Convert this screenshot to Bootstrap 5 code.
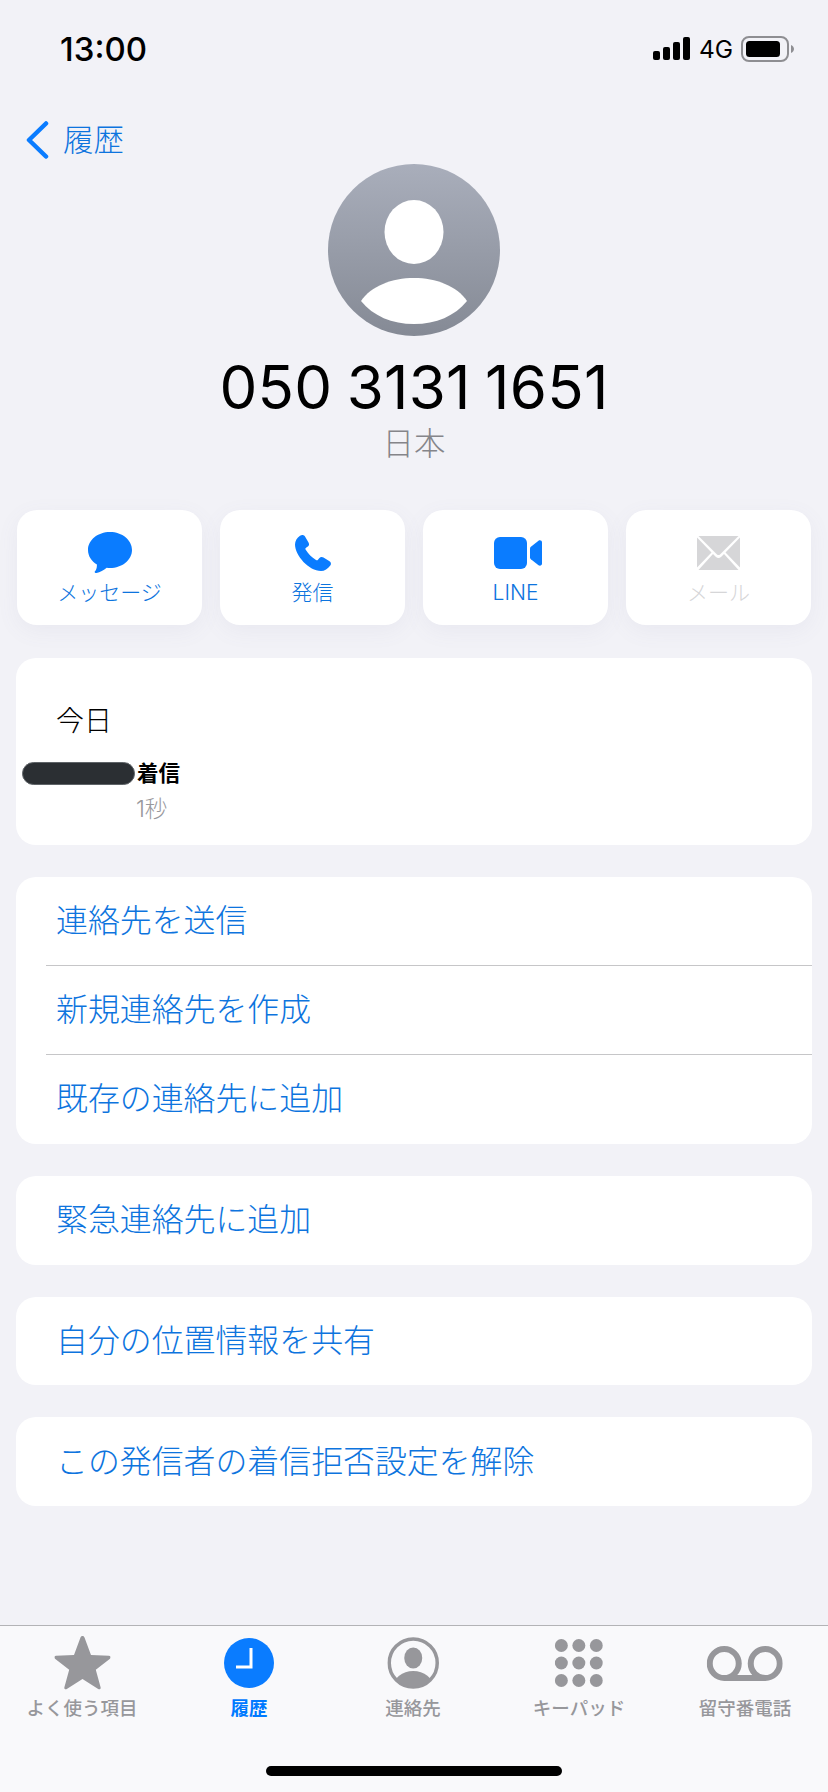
<!DOCTYPE html>
<html lang="ja">
<head>
<meta charset="utf-8">
<title>履歴</title>
<link href="https://cdn.jsdelivr.net/npm/bootstrap@5.3.0/dist/css/bootstrap.min.css" rel="stylesheet">
<style>
:root{--ios-blue:#007aff;--ios-text-blue:#0d74de;}
html,body{height:100%;}
body{width:828px;height:1792px;overflow:hidden;background:#f2f2f7;color:#000;font-family:Inter,"Noto Sans CJK JP",sans-serif;}
.screen{height:1792px;}
.status-line{height:98px;padding:0 33px 0 60px;}
.clock-text{font-size:33px;font-weight:500;letter-spacing:0;line-height:1;}
.net-text{font-size:24.5px;line-height:1;margin:0 8px 0 9px;}
.back-line{height:48px;margin-top:18px;padding-left:25px;color:var(--ios-text-blue);font-size:30.5px;line-height:1;font-weight:300;}
.back-line svg{margin-right:14px;}
.avatar-wrap{height:172px;}
.avatar-svg{display:block;}
.phone-title{font-size:60px;line-height:70px;margin:16px 0 0;font-weight:400;letter-spacing:.3px;word-spacing:-3px;}
.country-text{font-size:31.5px;line-height:42px;color:#85858a;font-weight:300;margin-top:1px;}
.action-row{margin:45px 17px 0;gap:18px;}
.action-tile{flex:1 1 0;height:115px;border:0;border-radius:20px;background:#fff;box-shadow:0 6px 22px rgba(120,120,150,.07);color:var(--ios-text-blue);font-size:21px;line-height:24px;font-weight:300;padding-top:22px;}
.action-tile.is-off{color:#d6d6d8;}
.icon-box{height:41px;margin-bottom:8px;}
.nudge-right{margin-left:4px;}
.sheet{margin:0 16px;border:0;border-radius:20px;background:#fff;overflow:hidden;}
.log-sheet{margin-top:33px;height:187px;position:relative;}
.today-text{font-size:28px;line-height:36px;padding:45px 0 0 40px;font-weight:300;}
.log-row{margin-top:22px;padding-left:6px;}
.blot{width:113px;height:23px;background:#2b2f33;border-radius:12px;border:1px solid #5f6468;flex:none;}
.log-kind{font-size:21.5px;line-height:24px;font-weight:700;margin-left:2px;}
.log-dur{font-size:22.5px;line-height:24px;color:#98989c;font-weight:300;padding-left:120px;margin-top:12px;}
.list-sheet{margin-top:32px;}
.list-sheet .list-group-item{border:0;background:transparent;height:88.9px;padding:0 0 0 40px;display:flex;align-items:center;font-size:31.9px;line-height:1;color:var(--ios-text-blue);font-weight:300;position:relative;}
.list-sheet .list-group-item + .list-group-item{box-shadow:none;}
.list-sheet .list-group-item + .list-group-item::before{content:"";position:absolute;left:30px;right:0;top:-1px;height:1px;background:#c6c6c8;}
.tab-bar{margin-top:auto;height:167px;border-top:1px solid #b3b3b6;background:#f9f9fb;position:relative;}
.tab-item{position:absolute;top:9px;text-align:center;color:#97979b;font-size:18.5px;line-height:24px;font-weight:500;transform:translateX(-50%);white-space:nowrap;}
.tab-item.is-on{color:var(--ios-blue);font-weight:700;}
.tab-glyph{height:56px;margin-bottom:5px;display:flex;justify-content:center;align-items:center;}
.tape-icon{margin-top:2px;}
.home-bar{position:absolute;left:266px;bottom:16px;width:296px;height:10px;border-radius:5px;background:#000;}
</style>
</head>
<body>
<div class="screen d-flex flex-column">
  <div class="status-line d-flex align-items-center justify-content-between">
    <span class="clock-text">13:00</span>
    <span class="d-flex align-items-center">
      <svg width="37" height="24" viewBox="0 0 37 24"><g fill="#000"><rect x="0" y="14" width="7" height="9" rx="2"/><rect x="10" y="10" width="7" height="13" rx="2"/><rect x="20" y="5" width="7" height="18" rx="2"/><rect x="30" y="0" width="7" height="23" rx="2"/></g></svg>
      <span class="net-text">4G</span>
      <svg width="54" height="26" viewBox="0 0 54 26"><rect x="1" y="1" width="46" height="24" rx="7" fill="none" stroke="#8e8e92" stroke-width="2"/><rect x="5" y="5" width="34" height="16" rx="3.500" fill="#000"/><path d="M50 9c2 1 3 2.500 3 4s-1 3-3 4z" fill="#8e8e92"/></svg>
    </span>
  </div>

  <div class="back-line d-flex align-items-center">
    <svg width="24" height="38" viewBox="0 0 24 38"><path d="M21 2.500 4 19l17 16.500" fill="none" stroke="#0a7cff" stroke-width="4.500" stroke-linecap="round" stroke-linejoin="round"/></svg>
    <span>履歴</span>
  </div>

  <div class="avatar-wrap d-flex justify-content-center">
    <svg class="avatar-svg" width="172" height="172" viewBox="0 0 172 172">
      <defs><linearGradient id="avg" x1="0" y1="0" x2="0" y2="1"><stop offset="0" stop-color="#a9aebb"/><stop offset="1" stop-color="#858a95"/></linearGradient></defs>
      <circle cx="86" cy="86" r="86" fill="url(#avg)"/>
      <ellipse cx="86" cy="68" rx="29.500" ry="32" fill="#fff"/>
      <path d="M33 137c10-15 31-23 53-23s43 8 53 23c-12 15-31 23-53 23s-41-8-53-23z" fill="#fff"/>
    </svg>
  </div>

  <h1 class="phone-title text-center">050 3131 1651</h1>
  <div class="country-text text-center">日本</div>

  <div class="action-row d-flex">
    <div class="action-tile card text-center">
      <div class="icon-box d-flex justify-content-center align-items-center">
        <svg width="44" height="41" viewBox="0 0 44 41"><path d="M22 0c12.200 0 22 8 22 18s-9.800 18-22 18c-1.100 0-2.200-.1-3.300-.2C15.800 38.500 12 40.300 8.500 41c-1.500.2-2.300-.8-1.500-1.700 1.300-1.500 2-3.800 1.900-6.700C3.500 29.300 0 24 0 18 0 8 9.800 0 22 0z" fill="#0a7cff"/></svg>
      </div>
      メッセージ
    </div>
    <div class="action-tile card text-center">
      <div class="icon-box d-flex justify-content-center align-items-center">
        <svg width="36" height="36" viewBox="0 0 36 36"><path d="M5 .8C7-.5 9 0 10 1.500l3.500 6c1 1.800.5 3.300-1 4.300l-1.500 1c-.7.500-.8 1.200-.3 2 2.800 4.500 5.800 7.500 10.300 10.200.8.500 1.500.4 2-.3l1.200-1.400c1.100-1.300 2.800-1.600 4.300-.7l6 3.700c1.500.9 1.900 2.700.8 4.100C32.800 33.800 29.500 36 26 36 14 36 0 20.500 0 9.500 0 6 2 2.800 5 .8z" fill="#0a7cff"/></svg>
      </div>
      発信
    </div>
    <div class="action-tile card text-center">
      <div class="icon-box d-flex justify-content-center align-items-center">
        <svg class="nudge-right" width="48" height="32" viewBox="0 0 48 32"><rect x="0" y="0" width="33" height="32" rx="6" fill="#0a7cff"/><path d="M36 11.500c0-.8.300-1.300.9-1.800l7.600-5.900c1.500-1 3.500-.2 3.500 1.700v21c0 1.900-2 2.700-3.500 1.700l-7.600-5.900c-.6-.5-.9-1-.9-1.800z" fill="#0a7cff"/></svg>
      </div>
      LINE
    </div>
    <div class="action-tile card text-center is-off">
      <div class="icon-box d-flex justify-content-center align-items-center">
        <svg width="43" height="34" viewBox="0 0 43 34"><g fill="#d6d6d8"><path d="M1.500 0h40L23 18.500c-.9.800-2.100.8-3 0z"/><path d="M0 1.500V31.500L14.500 16.500zM43 1.500V31.500L28.500 16.500z"/><path d="M1.500 34 16 18l3 3c1.500 1.300 3.500 1.300 5 0l3-3 14.500 16z"/></g></svg>
      </div>
      メール
    </div>
  </div>

  <div class="sheet card log-sheet">
    <div class="today-text">今日</div>
    <div class="log-row d-flex align-items-center">
      <span class="blot"></span>
      <span class="log-kind">着信</span>
    </div>
    <div class="log-dur">1秒</div>
  </div>

  <div class="sheet list-sheet">
    <div class="list-group list-group-flush">
      <div class="list-group-item">連絡先を送信</div>
      <div class="list-group-item">新規連絡先を作成</div>
      <div class="list-group-item">既存の連絡先に追加</div>
    </div>
  </div>
  <div class="sheet list-sheet"><div class="list-group list-group-flush"><div class="list-group-item">緊急連絡先に追加</div></div></div>
  <div class="sheet list-sheet"><div class="list-group list-group-flush"><div class="list-group-item">自分の位置情報を共有</div></div></div>
  <div class="sheet list-sheet"><div class="list-group list-group-flush"><div class="list-group-item">この発信者の着信拒否設定を解除</div></div></div>

  <div class="tab-bar">
    <div class="tab-item" style="left:82px">
      <div class="tab-glyph"><svg width="56" height="54" viewBox="0 0 56 54"><path d="M28 0c1 0 1.700.6 2.200 2l6.300 17 18 .8c1.800.1 2.400 1.800 1 3L41.300 33.700l4.800 17.500c.4 1.700-1 2.700-2.400 1.800L28 43l-15.700 10c-1.400.9-2.800-.1-2.400-1.800l4.800-17.500L.5 22.800c-1.400-1.200-.8-2.900 1-3l18-.8L25.800 2c.5-1.400 1.200-2 2.200-2z" fill="#97979b"/></svg></div>
      よく使う項目
    </div>
    <div class="tab-item is-on" style="left:249px">
      <div class="tab-glyph"><svg width="50" height="50" viewBox="0 0 50 50"><circle cx="25" cy="25" r="25" fill="#0a7cff"/><path d="M27 10v19H12" fill="none" stroke="#fff" stroke-width="3"/></svg></div>
      履歴
    </div>
    <div class="tab-item" style="left:413px">
      <div class="tab-glyph"><svg width="52" height="52" viewBox="0 0 52 52"><defs><clipPath id="cc"><circle cx="26" cy="26" r="24"/></clipPath></defs><circle cx="26" cy="26" r="24" fill="none" stroke="#97979b" stroke-width="3.500"/><ellipse cx="26" cy="21" rx="9" ry="10.500" fill="#97979b"/><ellipse cx="26" cy="50" rx="20" ry="16" fill="#97979b" clip-path="url(#cc)"/></svg></div>
      連絡先
    </div>
    <div class="tab-item" style="left:579px">
      <div class="tab-glyph"><svg width="48" height="48" viewBox="0 0 48 48"><g fill="#97979b"><circle cx="6.500" cy="6.500" r="6.500"/><circle cx="24" cy="6.500" r="6.500"/><circle cx="41.500" cy="6.500" r="6.500"/><circle cx="6.500" cy="24" r="6.500"/><circle cx="24" cy="24" r="6.500"/><circle cx="41.500" cy="24" r="6.500"/><circle cx="6.500" cy="41.500" r="6.500"/><circle cx="24" cy="41.500" r="6.500"/><circle cx="41.500" cy="41.500" r="6.500"/></g></svg></div>
      キーパッド
    </div>
    <div class="tab-item" style="left:745px">
      <div class="tab-glyph"><svg class="tape-icon" width="76" height="36" viewBox="0 0 76 36"><g fill="none" stroke="#97979b" stroke-width="6"><circle cx="17.500" cy="17.500" r="14.500"/><circle cx="58.500" cy="17.500" r="14.500"/><path d="M17.500 32h41"/></g></svg></div>
      留守番電話
    </div>
    <div class="home-bar"></div>
  </div>
</div>
<script src="https://cdn.jsdelivr.net/npm/bootstrap@5.3.0/dist/js/bootstrap.bundle.min.js"></script>
</body>
</html>
